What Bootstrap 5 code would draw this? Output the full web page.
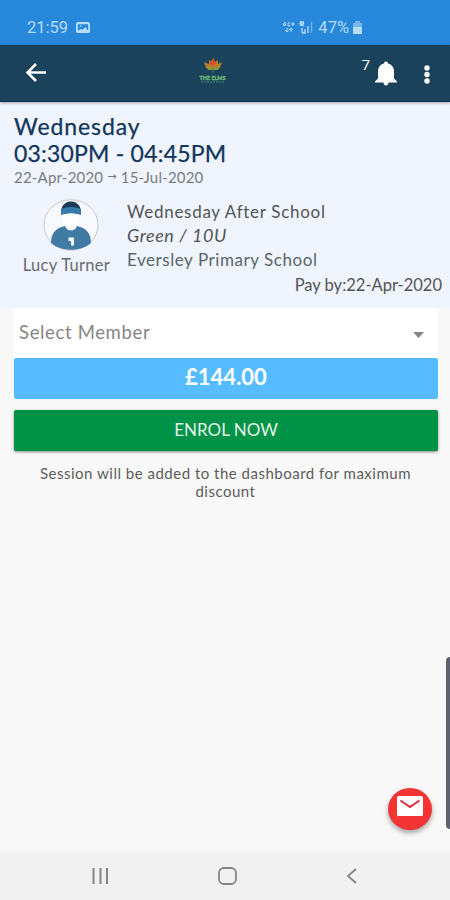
<!DOCTYPE html>
<html lang="en">
<head>
<meta charset="utf-8">
<meta name="viewport" content="width=device-width, initial-scale=1">
<title>Session enrolment</title>
<link href="https://cdn.jsdelivr.net/npm/bootstrap@5.3.0/dist/css/bootstrap.min.css" rel="stylesheet">
<style>
body{font-family:Lato,"Open Sans",sans-serif;background:#f8f8f8;color:#505459;height:900px;overflow:hidden;font-size:17px;white-space:nowrap}
svg{display:block;flex:none}
.status-bar{height:45px;background:#2787da;color:#b5dcfa;font-family:Roboto,sans-serif;padding:16px 88px 0 27px;font-size:16.5px}
.status-bar svg{margin-top:5px}
.app-bar{height:57px;background:#1a435b;border-bottom:1px solid #0c3353;box-shadow:0 1px 3px #0005;padding:0 17px 0 24px;z-index:2}
.bell-count{font-size:15px;line-height:16px;font-family:"Open Sans",sans-serif;margin:-19px 4px 0 0}
.club-logo{left:196px;top:10px;overflow:visible}
.session{height:206px;background:#f0f4fc;padding:11px 8px 0 14px}
.session-title{color:#12365c;font-size:23px;line-height:27px;font-weight:400;-webkit-text-stroke:.25px}
.title-day{letter-spacing:.9px}
.title-time{letter-spacing:.2px}
.dates{color:#777c83;font-size:15px;line-height:20px;letter-spacing:.2px}
.arrow-mark{font-size:11px;font-family:"DejaVu Sans",sans-serif;vertical-align:3px}
.person{width:105px;padding-top:4px}
.person-name{line-height:22px;margin-top:3px;color:#666b70;font-size:16.5px;letter-spacing:.3px}
.details{padding-left:8px;line-height:24px;padding-top:5px;letter-spacing:.7px}
.team{font-size:18px;line-height:23px;letter-spacing:.55px}
.school{color:#56666c;letter-spacing:.56px;line-height:25px}
.pay{line-height:18px;font-size:16.5px}
.enrol{padding:0 12px 0 13px}
.member{height:50px;background:#fff;border:0;border-radius:0;color:#858585;font-size:18.5px;padding:0 14px 1px 6px;letter-spacing:.65px}
.price{height:41px;background:#56bcff;font-size:22px;line-height:37px;border-radius:2px;margin-left:1px}
.enrol-btn{height:41px;background:#009247;border:0;border-radius:2px;color:#e3f5e8;font-size:17px;line-height:37px;box-shadow:0 1px 3px #0007;margin:11px 0 0 1px;padding:0 0 2px}
.note{font-size:15px;line-height:18px;margin-top:13px;letter-spacing:.5px;color:#5c5c5c}
.edge-handle{right:0;top:657px;width:4px;height:172px;background:#606070;border-radius:4px 0 0 4px}
.mail-btn{left:388px;top:788px;width:44px;height:42px;background:#f33434;border:0;border-radius:50%;box-shadow:0 3px 5px #0005;padding:0 0 7px}
.nav-keys{height:49px;background:#f1f1f1;padding:0 92px 0 92px}
</style>
<script src="https://cdn.jsdelivr.net/npm/bootstrap@5.3.0/dist/js/bootstrap.bundle.min.js"></script>
</head>
<body class="d-flex flex-column position-relative m-0">
<div class="status-bar d-flex justify-content-between">
  <div class="d-flex gap-2"><span>21:59</span>
    <svg width="14" height="13" viewBox="0 0 15 13"><rect y=".5" width="15" height="12" rx="2" fill="#b5dcfa"/><path d="M2 10V3h11v7l-3-4-3 3-2-1z" fill="#2787da"/><circle cx="5" cy="5" r="1" fill="#b5dcfa"/></svg>
  </div>
  <div class="d-flex">
    <svg class="me-1" width="32" height="15" viewBox="0 0 32 15" fill="none" stroke="#b5dcfa"><path d="M3 1L1 4h3M3 1v4M8 2H6v3h2V4M11 1v4M9 3h4M5 7v4M3 9l2 2 2-2M9 11V7M7 9l2-2 2 2"/><path d="M18.500 5V1h3v2h-3l3 2M20 12V7M20 12h3V8M26 12V5" stroke-width="1.300"/><path d="M29.500 12V1" opacity=".5" stroke-width="1.500"/></svg>
    <span>47%</span>
    <svg class="ms-1" width="9" height="13" viewBox="0 0 9 13" fill="#b5dcfa"><path d="M2 0h5v2h2v5H0V2h2z" opacity=".55"/><path d="M0 6h9v7H0z"/></svg>
  </div>
</div>
<header class="app-bar d-flex align-items-center justify-content-between position-relative text-white">
  <svg width="24" height="22" viewBox="0 0 24 22" fill="none" stroke="#fff" stroke-width="2.600"><path d="M22 10.500H4M12 2L3.500 10.500 12 19"/></svg>
  <svg class="club-logo position-absolute" width="34" height="34" viewBox="0 0 34 34"><path d="M10 13L8 7l5 2V5l3 2 1-4 2 4 3-2v4l4-2-2 6z" fill="#b77a2d"/><path d="M14 8l3-5 3 5-3 3z" fill="#d64d2e"/><path d="M10 11l7 2 7-2-2 4H12z" fill="#8b9738"/><path d="M17 13v5" stroke="#438069"/><text x="3.500" y="25" textLength="26" lengthAdjust="spacingAndGlyphs" font-family="Lato" font-weight="900" font-size="6" fill="#69b477" stroke="#69b477" stroke-width=".4">THE ELMS</text><path d="M5 27h23" stroke="#46846f" stroke-dasharray="2 1"/></svg>
  <div class="d-flex align-items-center">
    <span class="bell-count">7</span>
    <svg width="24" height="26" viewBox="0 0 24 26" fill="#fff"><path d="M12 1.500c1.500 0 2 .8 2 2 4 1 6 4 6 8v7l3 3v1H1v-1l3-3v-7c0-4 2-7 6-8 0-1.200.5-2 2-2zM9.500 22.500h5c0 4-5 4-5 0z"/></svg>
    <svg class="ms-4 mt-1" width="11" height="22" viewBox="0 0 11 22" fill="#fff"><circle cx="5" cy="4" r="2.700"/><circle cx="5" cy="10.500" r="2.700"/><circle cx="5" cy="17" r="2.700"/></svg>
  </div>
</header>
<section class="session">
  <h1 class="session-title m-0"><span class="title-day">Wednesday</span><br><span class="title-time">03:30PM - 04:45PM</span></h1>
  <div class="dates">22-Apr-2020 <span class="arrow-mark">→</span> 15-Jul-2020</div>
  <div class="d-flex pt-2">
    <div class="person d-flex flex-column align-items-center">
      <svg class="ms-2" width="56" height="52" viewBox="0 0 56 52"><ellipse cx="28" cy="26" rx="27" ry="25.300" fill="#f8f9fd" stroke="#c8cbd0"/><path d="M18.500 10c2-10 17-10 19 0l.5 2H18z" fill="#193b57"/><path d="M18 10q10-4 20 0v6q-10-3-20 0z" fill="#377ba8"/><path d="M20 15.500q8-2 16 0V19c0 5-4 9-8 9s-8-4-8-9z" fill="#fff"/><path d="M8 44c0-9 4-15 14-17 2 6 10 6 12 0 10 2 14 8 14 17-10 9-30 9-40 0z" fill="#407ba3"/><path d="M25.500 38.500h5.500v8h-3v-4.500h-2.500z" fill="#fff"/></svg>
      <div class="person-name">Lucy Turner</div>
    </div>
    <div class="details">
      <div>Wednesday After School</div>
      <div class="team fst-italic">Green / 10U</div>
      <div class="school">Eversley Primary School</div>
    </div>
  </div>
  <div class="pay text-end">Pay by:22-Apr-2020</div>
</section>
<main class="enrol flex-grow-1">
  <button class="member btn w-100 d-flex justify-content-between align-items-center text-start"><span>Select Member</span><svg class="mt-1" width="11" height="6" viewBox="0 0 11 6"><path d="M0 0h11L5.500 6z" fill="#858585"/></svg></button>
  <div class="price text-center text-white fw-bold">£144.00</div>
  <div class="d-flex"><button class="enrol-btn btn flex-grow-1">ENROL NOW</button></div>
  <p class="note text-center mb-0">Session will be added to the dashboard for maximum<br>discount</p>
</main>
<div class="edge-handle position-absolute"></div>
<button class="mail-btn btn position-absolute d-flex align-items-center justify-content-center" aria-label="Messages"><svg width="28" height="22" viewBox="0 0 28 22"><rect x="1" y="1" width="26" height="20" rx="1.500" fill="#fff"/><path d="M4.500 5.500L14 12l9.500-6.500" fill="none" stroke="#d92d38" stroke-width="2"/></svg></button>
<nav class="nav-keys d-flex justify-content-between align-items-center">
  <svg width="17" height="16" viewBox="0 0 17 16" stroke="#858585" stroke-width="2"><path d="M1.500 0v16M8.500 0v16M15 0v16"/></svg>
  <svg width="20" height="20" viewBox="0 0 20 20"><rect x="1" y="2" width="17" height="16" rx="5" fill="none" stroke="#858585" stroke-width="1.800"/></svg>
  <svg width="12" height="16" viewBox="0 0 12 16" fill="none" stroke="#858585" stroke-width="1.800"><path d="M10 1L2 8l8 7"/></svg>
</nav>
</body>
</html>
